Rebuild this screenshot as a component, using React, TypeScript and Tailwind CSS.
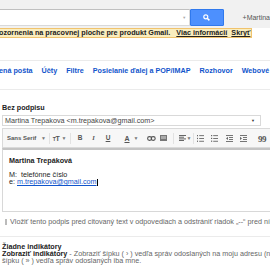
import React from "react";

const Caret = () => <span className="text-[5px] text-[#777] leading-none">▼</span>;

const Box = ({ w, children, start }: { w: string; children?: React.ReactNode; start?: boolean }) => (
  <div className={`${w} flex-none h-full flex items-center ${start ? "justify-start" : "justify-center"}`}>{children}</div>
);

const Sep = () => <span className="h-[11px] w-px bg-[#e2e2e2]" />;

const Lines = ({ dots }: { dots?: boolean }) => (
  <svg width="7" height="7" viewBox="0 0 7 7">
    {dots ? (
      <>
        <rect x="0" y="0" width="1.2" height="1.2" fill="#666" />
        <rect x="0" y="2.8" width="1.2" height="1.2" fill="#666" />
        <rect x="0" y="5.6" width="1.2" height="1.2" fill="#666" />
      </>
    ) : (
      <>
        <rect x="0" y="0" width="1" height="1.3" fill="#666" />
        <rect x="0" y="2.8" width="1" height="1.3" fill="#666" />
        <rect x="0" y="5.6" width="1" height="1.3" fill="#666" />
      </>
    )}
    <rect x="2.2" y="0.2" width="4.8" height="0.9" fill="#666" />
    <rect x="2.2" y="3" width="4.8" height="0.9" fill="#666" />
    <rect x="2.2" y="5.8" width="4.8" height="0.9" fill="#666" />
  </svg>
);

const Indent = ({ more }: { more?: boolean }) => (
  <svg width="7" height="7" viewBox="0 0 7 7">
    <rect x="0" y="0" width="7" height="0.9" fill="#666" />
    <rect x="3" y="2" width="4" height="0.9" fill="#666" />
    <rect x="3" y="4" width="4" height="0.9" fill="#666" />
    <rect x="0" y="6" width="7" height="0.9" fill="#666" />
    {more ? <path d="M0 1.8 L2 3.4 L0 5 Z" fill="#666" /> : <path d="M2 1.8 L0 3.4 L2 5 Z" fill="#666" />}
  </svg>
);

function Toolbar() {
  return (
    <div className="flex items-center h-[20px] border border-[#dadada] bg-[#f7f7f7] text-[#444] w-[300px]">
      <Box w="w-[4px]" />
      <Box w="w-[33px]" start>
        <span className="font-bold text-[6px] leading-none text-[#555]">Sans Serif</span>
      </Box>
      <Box w="w-[7px]"><Caret /></Box>
      <Box w="w-[4px]"><Sep /></Box>
      <Box w="w-[10px]">
        <span className="font-bold text-[7px] leading-none tracking-[-0.5px] text-[#555]">
          <span className="text-[5px]">T</span>T
        </span>
      </Box>
      <Box w="w-[6px]"><Caret /></Box>
      <Box w="w-[7px]"><Sep /></Box>
      <Box w="w-[12px]"><span className="font-bold text-[6.5px] leading-none text-[#555]">B</span></Box>
      <Box w="w-[15px]"><span className="italic font-bold text-[6.5px] leading-none text-[#555] font-['Liberation_Serif']">I</span></Box>
      <Box w="w-[14px]"><span className="underline font-bold text-[6.5px] leading-none text-[#555]">U</span></Box>
      <Box w="w-[6px]" />
      <Box w="w-[12px]"><span className="underline font-bold text-[7px] leading-none text-[#555]">A</span></Box>
      <Box w="w-[6px]"><Caret /></Box>
      <Box w="w-[6px]" />
      <Box w="w-[12px]">
        <svg width="9" height="5" viewBox="0 0 9 5">
          <rect x="0.6" y="0.6" width="4" height="3.8" rx="1.9" fill="none" stroke="#555" strokeWidth="1.1" />
          <rect x="4.2" y="0.6" width="4" height="3.8" rx="1.9" fill="none" stroke="#555" strokeWidth="1.1" />
        </svg>
      </Box>
      <Box w="w-[12px]">
        <svg width="7" height="6" viewBox="0 0 7 6">
          <rect x="0" y="0" width="7" height="6" fill="#777" />
          <rect x="1" y="1" width="5" height="3" fill="#aaa" />
        </svg>
      </Box>
      <Box w="w-[8px]"><Sep /></Box>
      <Box w="w-[10px]">
        <svg width="7" height="6" viewBox="0 0 7 6">
          <rect x="0" y="0" width="7" height="1" fill="#666" />
          <rect x="0" y="1.7" width="5" height="1" fill="#666" />
          <rect x="0" y="3.4" width="7" height="1" fill="#666" />
          <rect x="0" y="5" width="5" height="1" fill="#666" />
        </svg>
      </Box>
      <Box w="w-[4px]"><Caret /></Box>
      <Box w="w-[4px]"><Sep /></Box>
      <Box w="w-[11px]"><Lines /></Box>
      <Box w="w-[2px]" />
      <Box w="w-[13px]"><Lines dots /></Box>
      <Box w="w-[2px]" />
      <Box w="w-[13px]"><Indent /></Box>
      <Box w="w-[1px]" />
      <Box w="w-[13px]"><Indent more /></Box>
      <Box w="w-[5px]" />
      <Box w="w-[14px]">
        <span className="font-bold text-[9px] leading-none text-[#555] font-['Liberation_Serif'] tracking-[-0.5px] mt-[3px]">99</span>
      </Box>
    </div>
  );
}

export default function App() {
  return (
    <div className="relative w-[270px] h-[270px] overflow-hidden bg-white font-['Liberation_Sans',Arial,sans-serif] text-[#222]">
      {/* header */}
      <div className="h-[28px] bg-[#f1f1f1] flex items-start pt-[9px]">
        <div className="w-[194px] h-[17px] bg-white border-y border-r border-[#d9d9d9] border-t-[#c0c0c0] flex items-center justify-end pr-[3px]">
          <span className="text-[4px] text-[#aaa]">▼</span>
        </div>
        <div className="w-[34px] h-[17px] bg-[#4d90fe] border border-[#3079ed] rounded-[1px] flex items-center justify-center">
          <svg width="7" height="7" viewBox="0 0 7 7">
            <circle cx="2.8" cy="2.8" r="2" fill="none" stroke="white" strokeWidth="1.2" />
            <path d="M4.2 4.2 L6.4 6.4" stroke="white" strokeWidth="1.5" />
          </svg>
        </div>
        <span className="ml-[19px] text-[7px] leading-[17px] text-[#555] whitespace-nowrap">+Martina</span>
      </div>
      {/* notification */}
      <div className="h-[10px] w-[252px] bg-[#f9edbe] border border-l-0 border-[#f0c36d] flex items-center whitespace-nowrap text-[7.2px] font-bold leading-none text-[#222]">
        <span className="ml-[-1px]">ozornenia na pracovnej ploche pre produkt Gmail.</span>
        <span className="ml-[6px] underline">Viac informácií</span>
        <span className="ml-[4px] underline">Skryť</span>
      </div>
      {/* tabs */}
      <div className="mt-[22px] border-t border-[#ebebeb] h-[30px] border-b border-b-[#ebebeb] pt-[6px] flex gap-[9px] whitespace-nowrap text-[7.2px] leading-[8px] font-bold text-[#15c]">
        <span className="ml-[-1px]">ená pošta</span>
        <span>Účty</span>
        <span>Filtre</span>
        <span>Posielanie ďalej a POP/IMAP</span>
        <span>Rozhovor</span>
        <span>Webové klipy</span>
      </div>
      {/* signature section */}
      <div className="pl-[2px] pt-[14px]">
        <div className="text-[7.2px] font-bold leading-[8px] text-[#222]">Bez podpisu</div>
        <div className="mt-[3px] w-[259px] h-[11px] border border-[#d9d9d9] bg-white flex items-center justify-between pl-[2px] pr-[5px] text-[7.2px] leading-none text-[#444] whitespace-nowrap">
          <span>Martina Trepakova &lt;m.trepakova@gmail.com&gt;</span>
          <span className="text-[4px] text-[#333]">▼</span>
        </div>
        <div className="mt-[2px]">
          <Toolbar />
        </div>
        <div className="w-[300px] h-[64px] border border-[#d8d8d8] border-t-[2px] border-t-[#c4c4c4] bg-white pl-[6px] pt-[7px] text-[7.2px] leading-[7px] text-[#222]">
          <div className="font-bold">Martina Trepáková</div>
          <div className="mt-[7px]">M:&nbsp; telefónne číslo</div>
          <div>
            e: <span className="text-[#15c] underline">m.trepakova@gmail.com</span>
            <span className="inline-block w-px h-[7px] bg-black align-middle" />
          </div>
        </div>
        <div className="mt-[6px] flex items-center whitespace-nowrap text-[7.2px] leading-none text-[#666]">
          <span className="ml-[3px] w-[6px] h-[6px] border border-[#bbb] bg-white" />
          <span className="ml-[3px]">Vložiť tento podpis pred citovaný text v odpovediach a odstrániť riadok „--“ pred ním</span>
        </div>
      </div>
      <div className="mt-[11px] border-t border-[#ebebeb] pl-[2px] pt-[6px] text-[7.2px] leading-[7px] whitespace-nowrap">
        <div className="font-bold text-[#222]">Žiadne indikátory</div>
        <div className="text-[#666]">
          <span className="font-bold text-[#222]">Zobraziť indikátory</span> - Zobraziť šípku ( › ) vedľa správ odoslaných na moju adresu (nie
        </div>
        <div className="text-[#666]">šípku ( » ) vedľa správ odoslaných iba mne.</div>
      </div>
    </div>
  );
}
